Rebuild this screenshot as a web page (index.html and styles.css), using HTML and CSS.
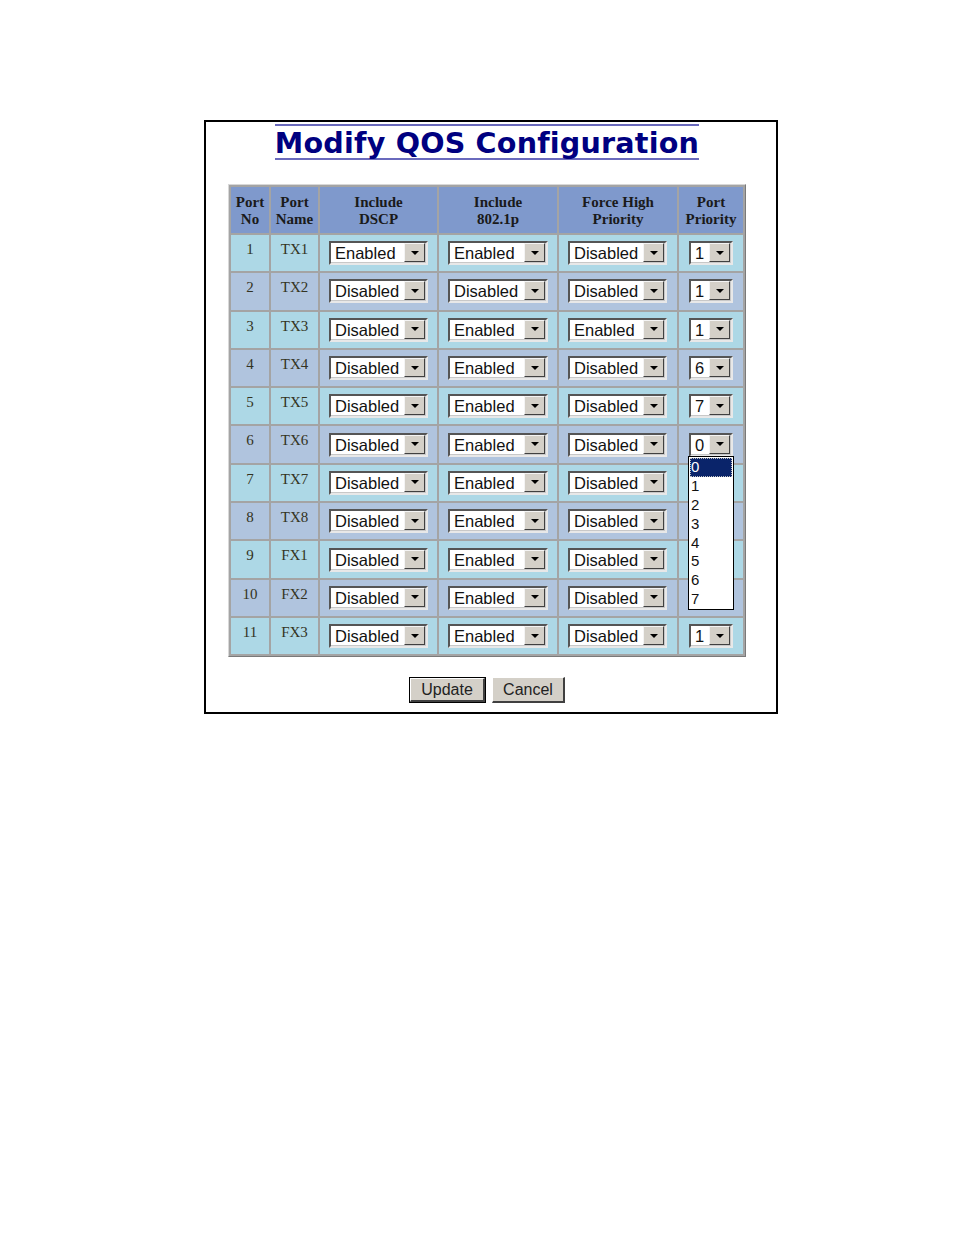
FILE: index.html
```html
<!DOCTYPE html>
<html>
<head>
<meta charset="utf-8">
<link rel="stylesheet" href="styles.css">
</head>
<body>
<div class="box">
  <div class="title-wrap"><h1 class="title">Modify QOS Configuration</h1></div>
  <div class="table-wrap">
  <table class="qos">
    <tr class="head">
      <th class="c1">Port<br>No</th>
      <th class="c2">Port<br>Name</th>
      <th class="c3">Include<br>DSCP</th>
      <th class="c4">Include<br>802.1p</th>
      <th class="c5">Force High<br>Priority</th>
      <th class="c6">Port<br>Priority</th>
    </tr>
    <tr class="odd"><td>1</td><td>TX1</td><td><span class="sel"><span class="v">Enabled</span><span class="arr"></span></span></td><td><span class="sel"><span class="v">Enabled</span><span class="arr"></span></span></td><td><span class="sel"><span class="v">Disabled</span><span class="arr"></span></span></td><td><span class="sel small"><span class="v">1</span><span class="arr"></span></span></td></tr>
    <tr class="even"><td>2</td><td>TX2</td><td><span class="sel"><span class="v">Disabled</span><span class="arr"></span></span></td><td><span class="sel"><span class="v">Disabled</span><span class="arr"></span></span></td><td><span class="sel"><span class="v">Disabled</span><span class="arr"></span></span></td><td><span class="sel small"><span class="v">1</span><span class="arr"></span></span></td></tr>
    <tr class="odd"><td>3</td><td>TX3</td><td><span class="sel"><span class="v">Disabled</span><span class="arr"></span></span></td><td><span class="sel"><span class="v">Enabled</span><span class="arr"></span></span></td><td><span class="sel"><span class="v">Enabled</span><span class="arr"></span></span></td><td><span class="sel small"><span class="v">1</span><span class="arr"></span></span></td></tr>
    <tr class="even"><td>4</td><td>TX4</td><td><span class="sel"><span class="v">Disabled</span><span class="arr"></span></span></td><td><span class="sel"><span class="v">Enabled</span><span class="arr"></span></span></td><td><span class="sel"><span class="v">Disabled</span><span class="arr"></span></span></td><td><span class="sel small"><span class="v">6</span><span class="arr"></span></span></td></tr>
    <tr class="odd"><td>5</td><td>TX5</td><td><span class="sel"><span class="v">Disabled</span><span class="arr"></span></span></td><td><span class="sel"><span class="v">Enabled</span><span class="arr"></span></span></td><td><span class="sel"><span class="v">Disabled</span><span class="arr"></span></span></td><td><span class="sel small"><span class="v">7</span><span class="arr"></span></span></td></tr>
    <tr class="even"><td>6</td><td>TX6</td><td><span class="sel"><span class="v">Disabled</span><span class="arr"></span></span></td><td><span class="sel"><span class="v">Enabled</span><span class="arr"></span></span></td><td><span class="sel"><span class="v">Disabled</span><span class="arr"></span></span></td><td class="open-cell"><span class="sel small"><span class="v">0</span><span class="arr"></span></span>
      <div class="list">
        <div class="opt hi">0</div><div class="opt">1</div><div class="opt">2</div><div class="opt">3</div><div class="opt">4</div><div class="opt">5</div><div class="opt">6</div><div class="opt">7</div>
      </div></td></tr>
    <tr class="odd"><td>7</td><td>TX7</td><td><span class="sel"><span class="v">Disabled</span><span class="arr"></span></span></td><td><span class="sel"><span class="v">Enabled</span><span class="arr"></span></span></td><td><span class="sel"><span class="v">Disabled</span><span class="arr"></span></span></td><td></td></tr>
    <tr class="even"><td>8</td><td>TX8</td><td><span class="sel"><span class="v">Disabled</span><span class="arr"></span></span></td><td><span class="sel"><span class="v">Enabled</span><span class="arr"></span></span></td><td><span class="sel"><span class="v">Disabled</span><span class="arr"></span></span></td><td></td></tr>
    <tr class="odd"><td>9</td><td>FX1</td><td><span class="sel"><span class="v">Disabled</span><span class="arr"></span></span></td><td><span class="sel"><span class="v">Enabled</span><span class="arr"></span></span></td><td><span class="sel"><span class="v">Disabled</span><span class="arr"></span></span></td><td></td></tr>
    <tr class="even"><td>10</td><td>FX2</td><td><span class="sel"><span class="v">Disabled</span><span class="arr"></span></span></td><td><span class="sel"><span class="v">Enabled</span><span class="arr"></span></span></td><td><span class="sel"><span class="v">Disabled</span><span class="arr"></span></span></td><td></td></tr>
    <tr class="odd"><td>11</td><td>FX3</td><td><span class="sel"><span class="v">Disabled</span><span class="arr"></span></span></td><td><span class="sel"><span class="v">Enabled</span><span class="arr"></span></span></td><td><span class="sel"><span class="v">Disabled</span><span class="arr"></span></span></td><td><span class="sel small"><span class="v">1</span><span class="arr"></span></span></td></tr>
  </table>
  </div>
  <div class="buttons">
    <span class="btn default"><span class="btn-in">Update</span></span>
    <span class="btn"><span class="btn-in">Cancel</span></span>
  </div>
</div>
</body>
</html>
```

FILE: styles.css
```css
html, body {
  margin: 0;
  padding: 0;
  background: #ffffff;
}
body {
  padding: 120px 0 0 204px;
}
.box {
  height: 590px;
  border: 2px solid #000000;
  padding: 0 8px 0 0;
  box-sizing: content-box;
  width: 562px;
}
.title-wrap {
  display: flex;
  justify-content: center;
  padding-top: 2px;
}
.title {
  margin: 0;
  font-family: "DejaVu Sans", Verdana, sans-serif;
  font-weight: bold;
  font-size: 28.6px;
  line-height: 30px;
  color: #000080;
  border-top: 2px solid #6a6abd;
  border-bottom: 2px solid #6a6abd;
  padding: 2px 0 0 0;
  letter-spacing: 0.2px;
}
.table-wrap {
  display: flex;
  justify-content: center;
  margin-top: 24px;
}
.qos {
  border-collapse: separate;
  border-spacing: 2px;
  background: #a4a4a4;
  border-top: 1px solid #d8d8d8;
  border-left: 1px solid #d8d8d8;
  border-right: 1px solid #7a7a7a;
  border-bottom: 1px solid #7a7a7a;
  font-family: "Liberation Serif", "Times New Roman", serif;
  font-size: 15px;
}
.qos th {
  background: #7f99cc;
  color: #1a1a1a;
  font-weight: bold;
  line-height: 17px;
  padding: 7px 0 0 0;
  vertical-align: top;
  text-align: center;
  box-sizing: border-box;
  height: 46px;
}
.c1 { width: 38px; }
.c2 { width: 47px; }
.c3 { width: 117px; }
.c4 { width: 118px; }
.c5 { width: 118px; }
.c6 { width: 64px; }
.qos td {
  height: 36.3px;
  padding: 0;
  text-align: center;
  vertical-align: middle;
  color: #333322;
  box-sizing: border-box;
}
.qos td:nth-child(1), .qos td:nth-child(2) {
  vertical-align: top;
  padding-top: 6px;
  line-height: 16px;
}
.qos td:nth-child(n+3) {
  text-align: left;
  padding-left: 9px;
  padding-top: 0;
}
.qos td:nth-child(6) {
  padding-left: 10px;
}
.odd td { background: #add8e6; }
.even td { background: #b0c4de; }
.sel {
  display: inline-flex;
  align-items: stretch;
  width: 99px;
  height: 24px;
  box-sizing: border-box;
  border-top: 2px solid #555555;
  border-left: 2px solid #555555;
  border-right: 2px solid #e8e8e8;
  border-bottom: 2px solid #e8e8e8;
  box-shadow: inset -1px -1px 0 #c8c8c8;
  background: #ffffff;
  vertical-align: middle;
  font-family: "Liberation Sans", Arial, sans-serif;
  font-size: 16.5px;
  color: #111111;
}
.qos td:nth-child(4) .sel { width: 100px; }
.sel.small { width: 44px; }
.sel .v {
  flex: 1;
  padding-left: 4px;
  line-height: 20px;
  white-space: nowrap;
  overflow: hidden;
}
.sel .arr {
  width: 21px;
  margin: 0 1px 1px 0;
  background: #d4d0c8;
  border-top: 1px solid #f4f4f4;
  border-left: 1px solid #f4f4f4;
  border-right: 1px solid #404040;
  border-bottom: 1px solid #404040;
  box-sizing: border-box;
  position: relative;
}
.sel .arr::after {
  content: "";
  position: absolute;
  left: 50%;
  top: 50%;
  margin-left: -4px;
  margin-top: -2px;
  border-left: 4px solid transparent;
  border-right: 4px solid transparent;
  border-top: 4px solid #000000;
}
.open-cell {
  position: relative;
}
.list {
  position: absolute;
  left: 9px;
  top: 30px;
  width: 46px;
  height: 154px;
  box-sizing: border-box;
  border: 1px solid #000000;
  background: #ffffff;
  z-index: 5;
  font-family: "Liberation Sans", Arial, sans-serif;
  font-size: 15px;
  padding-top: 1px;
}
.opt {
  height: 18.8px;
  line-height: 18.8px;
  padding-left: 2px;
  color: #111111;
  overflow: hidden;
}
.opt.hi {
  background: #0a246a;
  color: #ffffff;
  outline: 1px dotted #c0c0c0;
  outline-offset: -1px;
  margin: 0 1px;
  padding-left: 1px;
}
.buttons {
  display: flex;
  justify-content: center;
  gap: 6px;
  margin-top: 20px;
}
.btn {
  display: inline-block;
  font-family: "Liberation Sans", Arial, sans-serif;
  font-size: 16px;
  color: #222222;
}
.btn-in {
  display: block;
  background: #d4d0c8;
  border-top: 1px solid #ffffff;
  border-left: 1px solid #ffffff;
  border-right: 2px solid #404040;
  border-bottom: 2px solid #404040;
  height: 26px;
  line-height: 24px;
  box-sizing: border-box;
  text-align: center;
}
.btn.default {
  border: 1px solid #000000;
}
.btn.default .btn-in {
  height: 24px;
  line-height: 22px;
  width: 75px;
}
.btn:not(.default) .btn-in {
  width: 73px;
}
```
